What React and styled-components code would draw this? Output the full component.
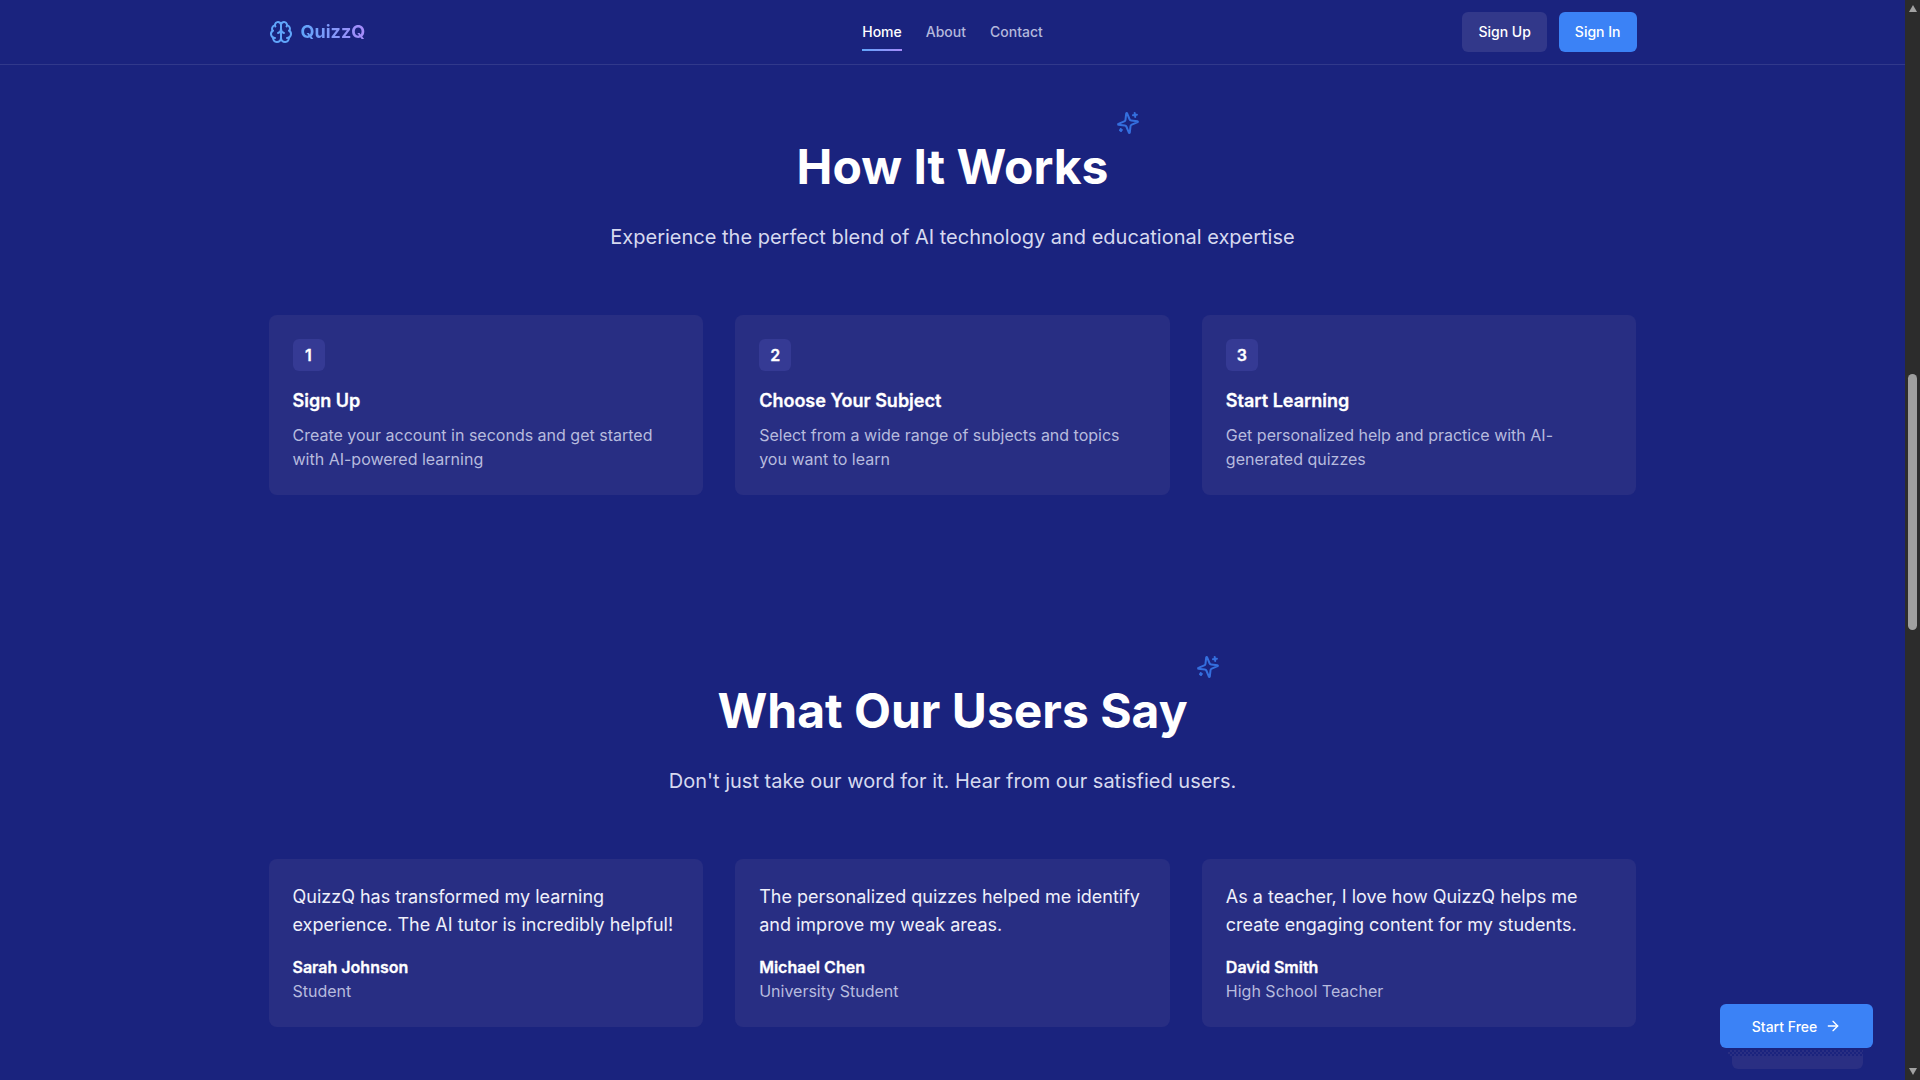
import React from 'react';
import styled, { createGlobalStyle } from 'styled-components';
import { ArrowRight, Brain } from 'lucide-react';

const GlobalStyle = createGlobalStyle`
  html, body {
    margin: 0;
    padding: 0;
    height: 100%;
    overflow: hidden;
    background: #1a237e;
  }
  * {
    box-sizing: border-box;
  }
`;

const Shell = styled.div`
  display: flex;
  width: 1920px;
  height: 1080px;
  overflow: hidden;
  font-family: Inter, "Liberation Sans", sans-serif;
  color: #ffffff;
`;

const Page = styled.div`
  position: relative;
  flex: 1;
  min-width: 0;
  background: #1a237e;
`;

const Nav = styled.nav`
  height: 65px;
  border-bottom: 1px solid rgba(255, 255, 255, 0.1);
`;

const NavInner = styled.div`
  width: 1368px;
  height: 64px;
  margin: 0 auto;
  display: grid;
  grid-template-columns: 1fr auto 1fr;
  align-items: center;
`;

const Logo = styled.div`
  display: flex;
  align-items: center;
  gap: 8px;
  color: #60a5fa;
`;

const LogoText = styled.span`
  font-size: 18px;
  font-weight: 700;
  line-height: 28px;
  background: linear-gradient(90deg, #60a5fa, #a78bfa);
  -webkit-background-clip: text;
  background-clip: text;
  color: transparent;
`;

const NavLinks = styled.div`
  display: flex;
  gap: 24px;
`;

const NavLink = styled.a`
  position: relative;
  padding: 8px 0;
  font-size: 14px;
  font-weight: 500;
  line-height: 20px;
  color: ${(p) => (p.$active ? '#ffffff' : '#b4b8dc')};

  ${(p) =>
    p.$active &&
    `&:after {
      content: '';
      position: absolute;
      left: 0;
      right: 0;
      bottom: -1px;
      height: 2px;
      background: linear-gradient(90deg, #60a5fa, #a78bfa);
    }`}
`;

const NavButtons = styled.div`
  display: flex;
  justify-content: flex-end;
  gap: 12px;
`;

const NavButton = styled.button`
  height: 40px;
  padding: 0 16px 1px;
  border: 0;
  border-radius: 6px;
  font-family: inherit;
  font-size: 14px;
  font-weight: 500;
  color: #ffffff;
  background: ${(p) => (p.$primary ? '#3b82f6' : '#32388a')};
`;

const Section = styled.section`
  width: 1368px;
  margin: 0 auto;
  padding-top: ${(p) => p.$top}px;
`;

const HeadingWrap = styled.div`
  position: relative;
  width: fit-content;
  margin: 0 auto;
`;

const Heading = styled.h2`
  margin: 0;
  font-size: 48px;
  font-weight: 700;
  line-height: 48px;
  text-align: center;
`;

const Spark = styled.span`
  position: absolute;
  top: -32px;
  right: -32px;
  display: flex;
  color: #3b82f6;
  opacity: 0.8;
  transform: rotate(-8deg);
`;

const Subtitle = styled.p`
  margin: 32px 0 0;
  font-size: 20px;
  line-height: 28px;
  text-align: center;
  color: #d6d9ef;
`;

const CardGrid = styled.div`
  display: grid;
  grid-template-columns: repeat(3, 1fr);
  gap: 32px;
  margin-top: 64px;
`;

const Card = styled.div`
  padding: 24px;
  border-radius: 8px;
  background: #282e83;
  transform: translateZ(0);
`;

const StepBadge = styled.div`
  display: flex;
  align-items: center;
  justify-content: center;
  width: 32px;
  height: 32px;
  border-radius: 6px;
  font-size: 16px;
  font-weight: 600;
  background: #353a94;
  -webkit-text-stroke: 0.3px #ffffff;
`;

const StepTitle = styled.h3`
  margin: 16px 0 0;
  font-size: 18px;
  font-weight: 600;
  line-height: 28px;
  -webkit-text-stroke: 0.3px #ffffff;
`;

const StepText = styled.p`
  margin: 8px 0 0;
  font-size: 16px;
  line-height: 24px;
  color: #b7bbde;
`;

const Quote = styled.p`
  margin: 0;
  font-size: 18px;
  line-height: 28px;
  color: #eff0fa;
`;

const Author = styled.div`
  margin-top: 16px;
  font-size: 16px;
  font-weight: 600;
  line-height: 24px;
  -webkit-text-stroke: 0.3px #ffffff;
`;

const Role = styled.div`
  font-size: 16px;
  line-height: 24px;
  color: #b7bbde;
`;

const StartFree = styled.button`
  position: absolute;
  left: 1720px;
  top: 1004px;
  display: flex;
  align-items: center;
  justify-content: center;
  gap: 8px;
  width: 153px;
  height: 44px;
  border: 0;
  border-radius: 6px;
  font-family: inherit;
  font-size: 14px;
  font-weight: 500;
  color: #ffffff;
  background: #3b82f6;
`;

/* the speckled shadow sitting under the floating button */
const ButtonGlow = styled.div`
  position: absolute;
  left: 1732px;
  top: 1056px;
  width: 131px;
  height: 13px;
  border-radius: 0 0 6px 6px;
  background: #2a2f83;

  &:before {
    content: '';
    position: absolute;
    left: -4px;
    right: 0;
    top: -6px;
    height: 6px;
    background: repeating-conic-gradient(#2a2f83 0 25%, #1a237e 0 50%) 0 0 / 4px 4px;
  }
`;

const Scrollbar = styled.div`
  display: flex;
  flex-direction: column;
  align-items: center;
  width: 15px;
  background: #2c2c2c;
`;

const ScrollArrow = styled.div`
  width: 0;
  height: 0;
  margin: ${(p) => (p.$down ? 'auto 0 5px' : '5px 0 0')};
  border-left: 4.5px solid transparent;
  border-right: 4.5px solid transparent;
  ${(p) => (p.$down ? 'border-top' : 'border-bottom')}: 7px solid #a3a3a3;
`;

const ScrollThumb = styled.div`
  width: 9px;
  height: 256px;
  margin-top: 362px;
  border-radius: 5px;
  background: #9f9f9f;
`;

const steps = [
  { n: 1, title: 'Sign Up', text: 'Create your account in seconds and get started with AI-powered learning' },
  { n: 2, title: 'Choose Your Subject', text: 'Select from a wide range of subjects and topics you want to learn' },
  { n: 3, title: 'Start Learning', text: 'Get personalized help and practice with AI-generated quizzes' },
];

const quotes = [
  { text: 'QuizzQ has transformed my learning experience. The AI tutor is incredibly helpful!', name: 'Sarah Johnson', role: 'Student' },
  { text: 'The personalized quizzes helped me identify and improve my weak areas.', name: 'Michael Chen', role: 'University Student' },
  { text: 'As a teacher, I love how QuizzQ helps me create engaging content for my students.', name: 'David Smith', role: 'High School Teacher' },
];

function SparkIcon() {
  return (
    <svg width="24" height="24" viewBox="0 0 24 24" fill="none" stroke="currentColor" strokeWidth="2" strokeLinecap="round" strokeLinejoin="round">
      <path d="M9.937 15.5A2 2 0 0 0 8.5 14.063l-6.135-1.582a.5.5 0 0 1 0-.962L8.5 9.936A2 2 0 0 0 9.937 8.5l1.582-6.135a.5.5 0 0 1 .963 0L14.063 8.5A2 2 0 0 0 15.5 9.937l6.135 1.581a.5.5 0 0 1 0 .964L15.5 14.063a2 2 0 0 0-1.437 1.437l-1.582 6.135a.5.5 0 0 1-.963 0z" />
      <path d="M20 3v4" />
      <path d="M22 5h-4" />
      <path d="M4 17v2" />
      <path d="M5 18H3" />
    </svg>
  );
}

function SectionHead({ title }) {
  return (
    <HeadingWrap>
      <Spark>
        <SparkIcon />
      </Spark>
      <Heading>{title}</Heading>
    </HeadingWrap>
  );
}

export default function App() {
  return (
    <Shell>
      <GlobalStyle />
      <Page>
        <Nav>
          <NavInner>
            <Logo>
              <Brain size={24} />
              <LogoText>QuizzQ</LogoText>
            </Logo>
            <NavLinks>
              <NavLink $active>Home</NavLink>
              <NavLink>About</NavLink>
              <NavLink>Contact</NavLink>
            </NavLinks>
            <NavButtons>
              <NavButton>Sign Up</NavButton>
              <NavButton $primary>Sign In</NavButton>
            </NavButtons>
          </NavInner>
        </Nav>

        <Section $top={78}>
          <SectionHead title="How It Works" />
          <Subtitle>Experience the perfect blend of AI technology and educational expertise</Subtitle>
          <CardGrid>
            {steps.map((s) => (
              <Card key={s.n}>
                <StepBadge>{s.n}</StepBadge>
                <StepTitle>{s.title}</StepTitle>
                <StepText>{s.text}</StepText>
              </Card>
            ))}
          </CardGrid>
        </Section>

        <Section $top={192}>
          <SectionHead title="What Our Users Say" />
          <Subtitle>Don't just take our word for it. Hear from our satisfied users.</Subtitle>
          <CardGrid>
            {quotes.map((q) => (
              <Card key={q.name}>
                <Quote>{q.text}</Quote>
                <Author>{q.name}</Author>
                <Role>{q.role}</Role>
              </Card>
            ))}
          </CardGrid>
        </Section>

        <ButtonGlow />
        <StartFree>
          Start Free
          <ArrowRight size={16} />
        </StartFree>
      </Page>
      <Scrollbar>
        <ScrollArrow />
        <ScrollThumb />
        <ScrollArrow $down />
      </Scrollbar>
    </Shell>
  );
}
